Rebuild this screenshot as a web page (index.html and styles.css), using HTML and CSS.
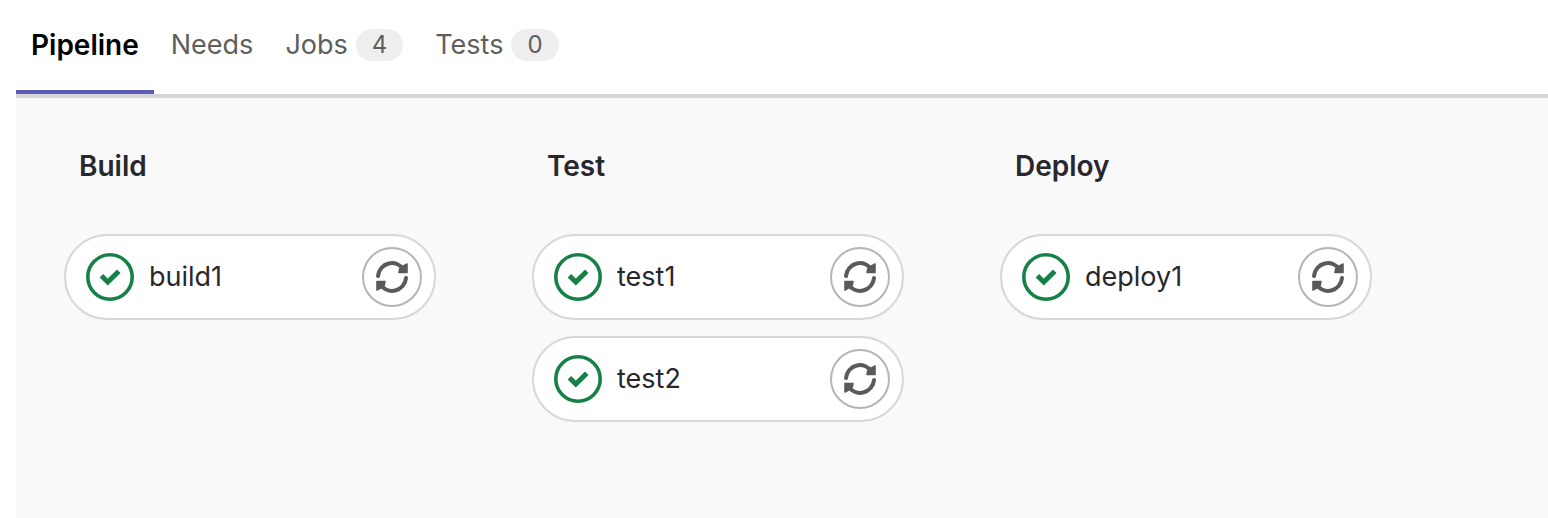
FILE: index.html
```html
<!DOCTYPE html>
<html lang="en">
    <head>
        <meta charset="utf-8">
        <title>Pipeline</title>
        <link rel="stylesheet" href="styles.css">
    </head>
    <body>
        <!-- shared icons -->
        <svg class="icons">
            <symbol id="passed" viewBox="0 0 48 48">
                <circle cx="24" cy="24" r="22.2" fill="none" stroke="currentColor" stroke-width="3.6"/>
                <path d="M15.400 22.800L21.800 29L32.800 18.200" fill="none" stroke="currentColor" stroke-width="5"/>
            </symbol>
            <symbol id="retry" viewBox="0 0 32 32">
                <path d="M2 15A14 14 0 0 1 28 9M30 17A14 14 0 0 1 4 23" fill="none" stroke="currentColor" stroke-width="4" stroke-linecap="round"/>
                <path d="M31 3V11.500H23L24 7ZM1 29V20.500H9L8 25Z" fill="currentColor" stroke="currentColor" stroke-width="1.600" stroke-linejoin="round"/>
            </symbol>
        </svg>

        <nav class="tabs">
            <a class="tab active" href="#">Pipeline</a>
            <a class="tab" href="#">Needs</a>
            <a class="tab" href="#">Jobs <span class="badge">4</span></a>
            <a class="tab" href="#">Tests <span class="badge">0</span></a>
        </nav>

        <main class="graph">
            <section class="stage">
                <h2 class="stage-name">Build</h2>
                <div class="job">
                    <svg class="status"><use href="#passed"/></svg>
                    <a class="job-name" href="#">build1</a>
                    <button class="retry" aria-label="Retry build1"><svg><use href="#retry"/></svg></button>
                </div>
            </section>

            <section class="stage">
                <h2 class="stage-name">Test</h2>
                <div class="job">
                    <svg class="status"><use href="#passed"/></svg>
                    <a class="job-name" href="#">test1</a>
                    <button class="retry" aria-label="Retry test1"><svg><use href="#retry"/></svg></button>
                </div>
                <div class="job">
                    <svg class="status"><use href="#passed"/></svg>
                    <a class="job-name" href="#">test2</a>
                    <button class="retry" aria-label="Retry test2"><svg><use href="#retry"/></svg></button>
                </div>
            </section>

            <section class="stage">
                <h2 class="stage-name">Deploy</h2>
                <div class="job">
                    <svg class="status"><use href="#passed"/></svg>
                    <a class="job-name" href="#">deploy1</a>
                    <button class="retry" aria-label="Retry deploy1"><svg><use href="#retry"/></svg></button>
                </div>
            </section>
        </main>
    </body>
</html>
```
FILE: styles.css
```css
* {
    box-sizing: border-box;
}
body {
    margin: 0;
    padding-left: 16px;
    min-height: 100vh;
    display: flex;
    flex-direction: column;
    background-color: #fff;
    color: #28272d;
    font-family: Inter, "Liberation Sans", sans-serif;
    font-size: 27px;
    line-height: 40px;
}
a {
    color: inherit;
    text-decoration: none;
}
.icons {
    display: none;
}
.tabs {
    display: flex;
    gap: 2px;
    border-bottom: 4px solid #d5d5d5;
}
.tab {
    display: flex;
    align-items: center;
    gap: 8px;
    height: 94px;
    padding: 0 15px;
    border-bottom: 4px solid transparent;
    color: #5e5e5e;
}
.active {
    border-bottom-color: #5c5cb5;
    color: #000;
    font-size: 28px;
    font-weight: 600;
}
.badge {
    padding: 0 16px;
    border-radius: 16px;
    background-color: #eee;
    font-size: 24px;
    line-height: 32px;
}
.graph {
    flex: 1;
    display: flex;
    gap: 96px;
    padding: 48px;
    background-color: #f9f9f9;
}
.stage {
    width: 372px;
}
.stage-name {
    margin: 0 0 48px;
    padding-left: 15px;
    font-size: 28px;
    font-weight: 600;
}
.job {
    display: flex;
    align-items: center;
    margin-bottom: 16px;
    padding: 11px 12px 11px 20px;
    border: 2px solid #d7d7d7;
    border-radius: 43px;
    background-color: #fff;
}
.status {
    width: 48px;
    height: 48px;
    color: #168046;
}
.job-name {
    flex: 1;
    margin-left: 15px;
}
.retry {
    display: flex;
    align-items: center;
    justify-content: center;
    width: 60px;
    height: 60px;
    padding: 0;
    border: 2px solid #b5b5b5;
    border-radius: 50%;
    background-color: #fff;
    color: #5a5a5a;
}
.retry svg {
    width: 32px;
    height: 32px;
}
```
